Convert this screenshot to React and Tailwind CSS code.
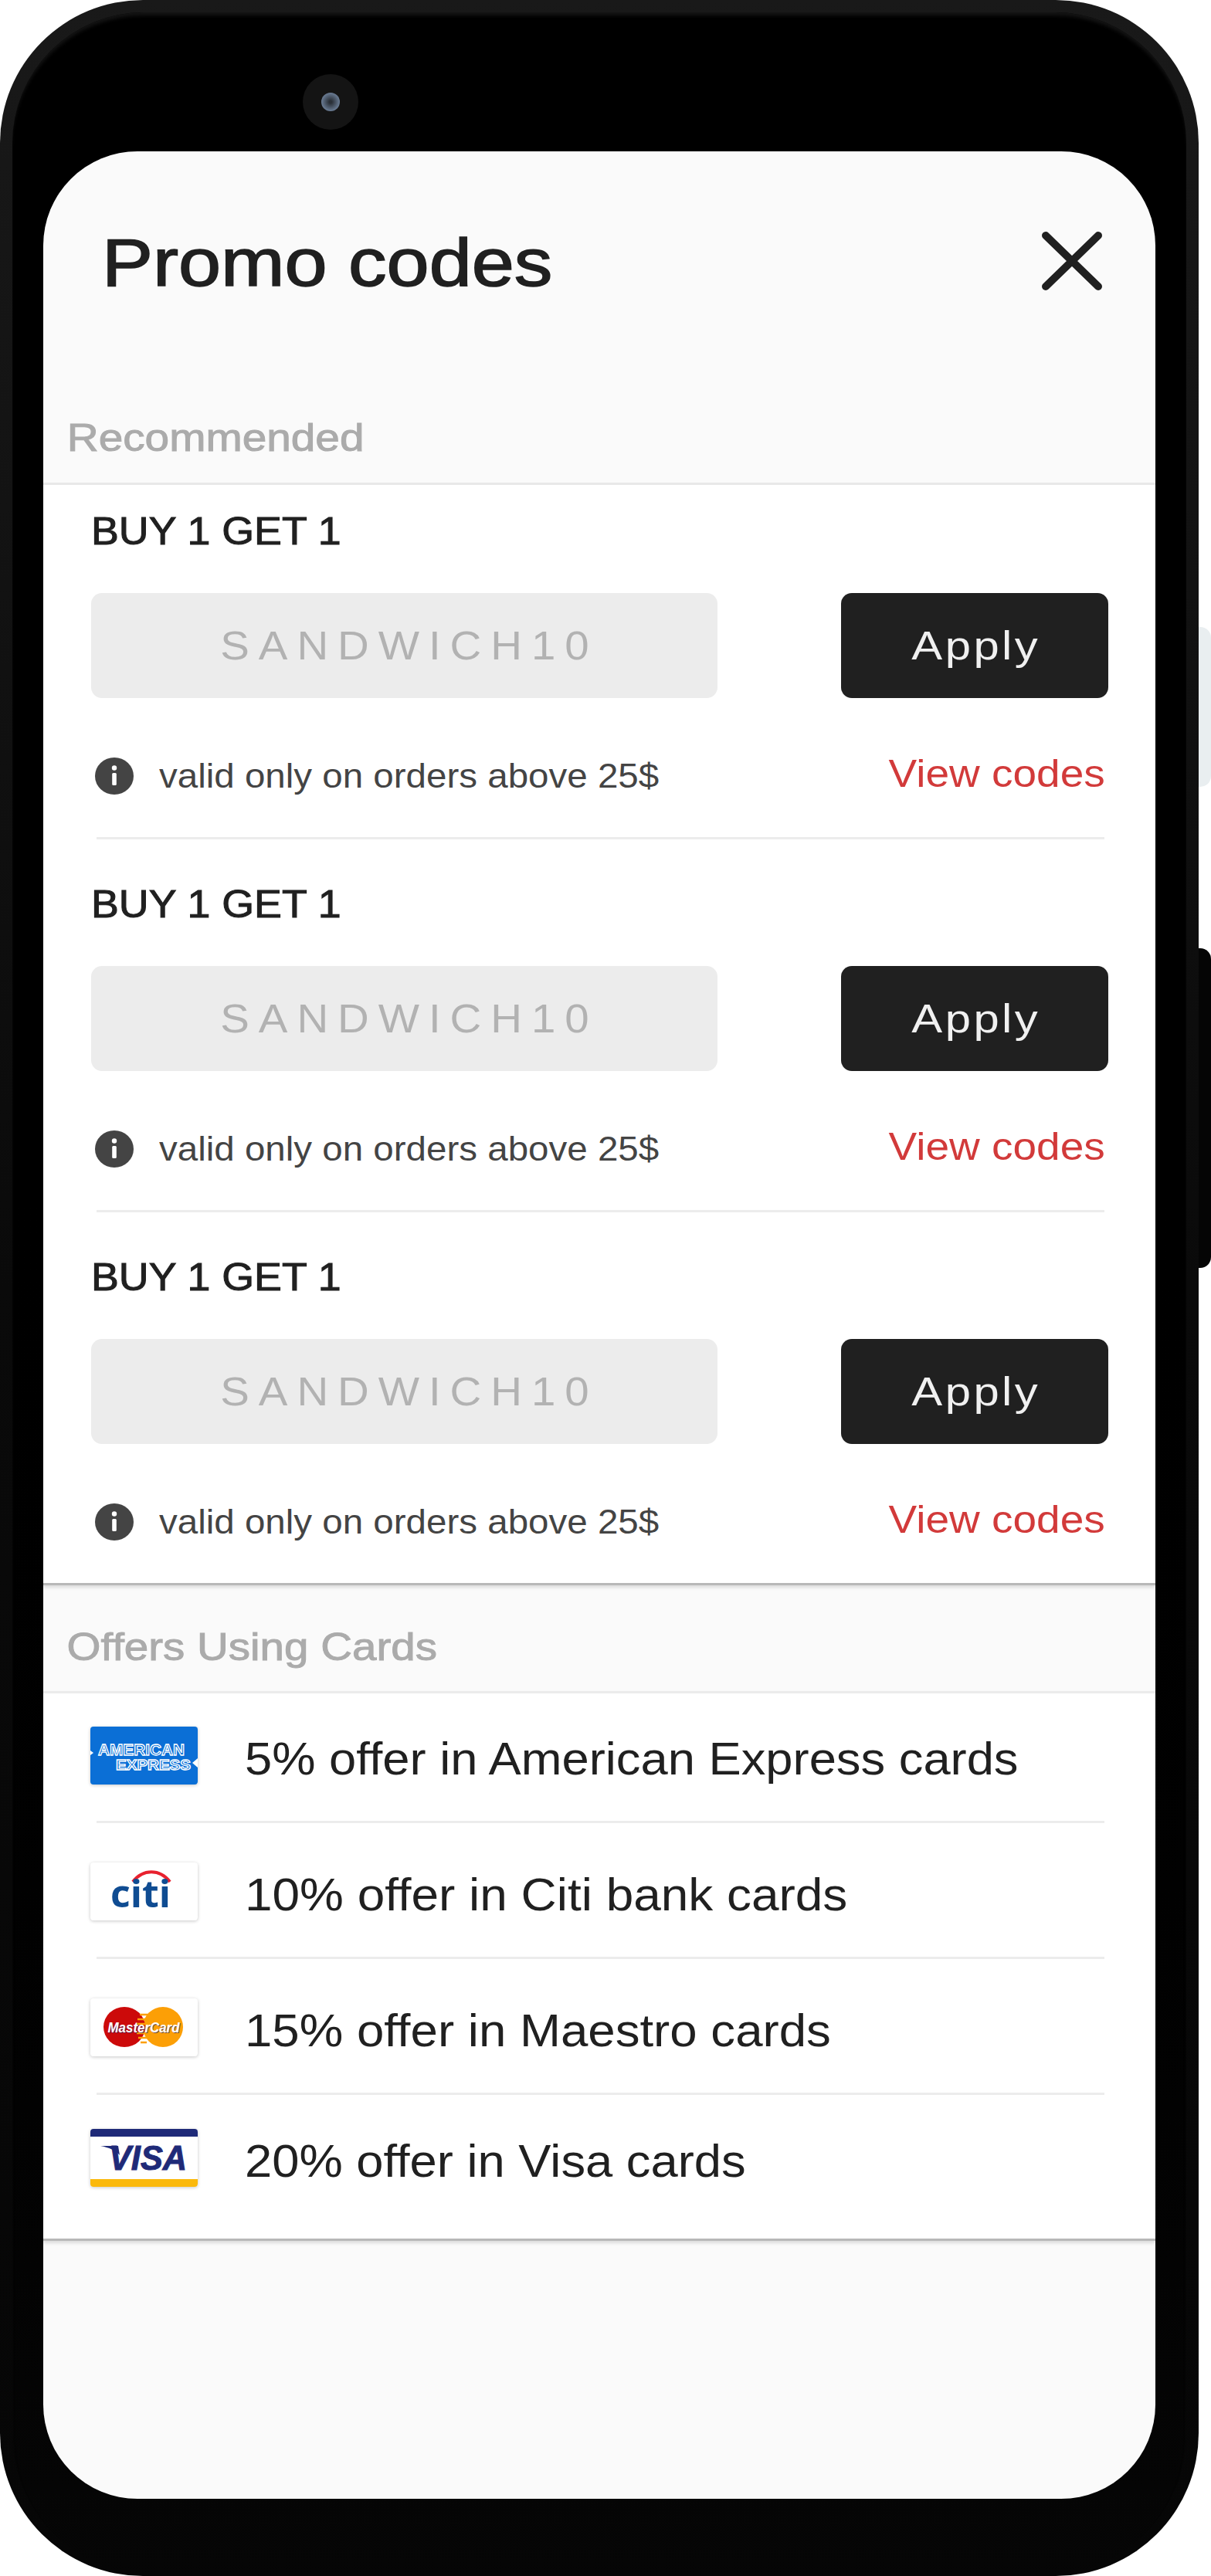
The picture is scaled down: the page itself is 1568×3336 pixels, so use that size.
const FONT = "font-['Liberation_Sans',Arial,sans-serif]";

function InfoIcon() {
  return (
    <svg width="50" height="48" viewBox="0 0 50 48" className="shrink-0">
      <ellipse cx="25" cy="24" rx="25" ry="24" fill="#444444" />
      <circle cx="25" cy="13.5" r="3.2" fill="#ffffff" />
      <rect x="22.2" y="20" width="5.6" height="16" rx="1.5" fill="#ffffff" />
    </svg>
  );
}

function CloseIcon() {
  return (
    <svg width="78" height="76" viewBox="0 0 78 76">
      <path d="M5 5 L73 71 M73 5 L5 71" stroke="#202020" strokeWidth="10" strokeLinecap="round" fill="none" />
    </svg>
  );
}

function PromoRow({ last }) {
  return (
    <div className="pt-[30px] pl-[62px] pr-[61px]">
      <div className="origin-left scale-x-[1.075] text-[50px] leading-[60px] text-[#202020] [-webkit-text-stroke:1px_#202020]">BUY 1 GET 1</div>
      <div className="mt-[50px] flex justify-between">
        <div className="flex h-[136px] w-[811px] items-center justify-center rounded-[14px] bg-[#ececec]">
          <span className="inline-block scale-x-[1.085] pl-[11px] text-[52px] tracking-[11px] text-[#b2b2b2]">SANDWICH10</span>
        </div>
        <div className="flex h-[136px] w-[346px] items-center justify-center rounded-[14px] bg-[#202020]">
          <span className="inline-block scale-x-[1.15] pl-[3px] text-[52px] tracking-[3px] text-[#f0f0f0]">Apply</span>
        </div>
      </div>
      <div className="mt-[68px] flex h-[60px] items-center justify-between pr-[4px]">
        <div className="flex items-center gap-[33px] pl-[5px] pt-[5px]">
          <InfoIcon />
          <span className="inline-block origin-left scale-x-[1.08] text-[44px] leading-[52px] text-[#444444]">valid only on orders above 25$</span>
        </div>
        <span className="inline-block origin-right scale-x-[1.1] text-[50px] leading-[60px] text-[#d23a3a]">View codes</span>
      </div>
      {!last && <div className="mt-[52px] ml-[7px] mr-[5px] h-[3px] bg-[#ececec]" />}
      {!last && <div className="h-[24px]" />}
      {last && <div className="h-[52px]" />}
    </div>
  );
}

function CardBox({ children, extra }) {
  return (
    <div className={`h-[75px] w-[139px] shrink-0 overflow-hidden rounded-[4px] shadow-[0_1px_4px_rgba(0,0,0,0.22)] ${extra}`}>
      {children}
    </div>
  );
}

function AmexLogo() {
  return (
    <CardBox extra="bg-[#0b6fd6]">
      <svg width="139" height="75" viewBox="0 0 139 75">
        <text x="10" y="37" fontFamily="Liberation Sans" fontWeight="700" fontSize="21" textLength="112" lengthAdjust="spacingAndGlyphs" fill="#0b6fd6" stroke="#ffffff" strokeWidth="1.3">AMERICAN</text>
        <text x="33" y="56" fontFamily="Liberation Sans" fontWeight="700" fontSize="18" textLength="97" lengthAdjust="spacingAndGlyphs" fill="#0b6fd6" stroke="#ffffff" strokeWidth="1.3">EXPRESS</text>
        <path d="M0 31 L4 34 L0 37 Z" fill="#ffffff" />
        <path d="M139 41 L132 47 L139 53 Z" fill="#ffffff" />
      </svg>
    </CardBox>
  );
}

function CitiLogo() {
  return (
    <CardBox extra="bg-white">
      <svg width="139" height="75" viewBox="0 0 139 75">
        <path d="M55 25 C68 8 90 8 103 25" stroke="#e8212e" strokeWidth="4" fill="none" />
        <text x="26" y="58" fontFamily="Open Sans" fontWeight="700" fontSize="48" textLength="78" lengthAdjust="spacingAndGlyphs" fill="#0f4c92">citi</text>
      </svg>
    </CardBox>
  );
}

function MastercardLogo() {
  return (
    <CardBox extra="bg-white">
      <svg width="139" height="75" viewBox="0 0 139 75">
        <ellipse cx="94" cy="37" rx="26" ry="26" fill="#fc9f06" />
        <ellipse cx="44" cy="37" rx="27" ry="26" fill="#cc0a0a" />
        <path d="M64 21 H75 M61 27 H77 M60 33 H78 M60 45 H78 M62 51 H76 M65 57 H73" stroke="#fc9f06" strokeWidth="2.4" />
        <text x="23.5" y="44.5" fontFamily="Liberation Sans" fontWeight="700" fontStyle="italic" fontSize="18" textLength="93" lengthAdjust="spacingAndGlyphs" fill="#30306e" opacity="0.7">MasterCard</text>
        <text x="22.5" y="43.5" fontFamily="Liberation Sans" fontWeight="700" fontStyle="italic" fontSize="18" textLength="93" lengthAdjust="spacingAndGlyphs" fill="#ffffff">MasterCard</text>
      </svg>
    </CardBox>
  );
}

function VisaLogo() {
  return (
    <CardBox extra="bg-white">
      <svg width="139" height="75" viewBox="0 0 139 75">
        <rect x="0" y="0" width="139" height="10" fill="#1f2a78" />
        <rect x="0" y="65" width="139" height="10" fill="#fbb90c" />
        <path d="M13 22 H36 L38 34 C33 28 24 24 13 22 Z" fill="#1f2a78" />
        <text x="24" y="53" fontFamily="Liberation Sans" fontWeight="700" fontStyle="italic" fontSize="44" textLength="101" lengthAdjust="spacingAndGlyphs" fill="#1f2a78" stroke="#1f2a78" strokeWidth="1">VISA</text>
      </svg>
    </CardBox>
  );
}

const offers = [
  { logo: <AmexLogo />, text: '5% offer in American Express cards', pad: 'pt-[43px] pb-[47px]', sx: 'scale-x-[1.055]' },
  { logo: <CitiLogo />, text: '10% offer in Citi bank cards', pad: 'pt-[51px] pb-[47px]', sx: 'scale-x-[1.065]' },
  { logo: <MastercardLogo />, text: '15% offer in Maestro cards', pad: 'pt-[51px] pb-[47px]', sx: 'scale-x-[1.06]' },
  { logo: <VisaLogo />, text: '20% offer in Visa cards', pad: 'pt-[44px] pb-[67px]', sx: 'scale-x-[1.055]' },
];

export default function App() {
  return (
    <div className={`relative h-[3336px] w-[1568px] overflow-hidden bg-white ${FONT}`}>
      {/* side buttons */}
      <div className="absolute left-[1552px] top-[812px] h-[207px] w-[16px] rounded-r-[14px] bg-[#e9eef0]" />
      <div className="absolute left-[1552px] top-[1228px] h-[414px] w-[16px] rounded-r-[14px] bg-[#050505]" />

      <div className="h-[3336px] w-[1552px] rounded-[185px] bg-gradient-to-b from-[#191919] via-[#0a0a0a] via-50% to-[#060606] px-[16px] pt-[16px]">
        <div className="h-[3320px] rounded-t-[170px] rounded-b-[185px] bg-gradient-to-b from-[#000000] via-[#000000] via-40% to-[#060606] px-[40px] pt-[80px] shadow-[inset_0_6px_5px_-2px_#151515]">
          {/* camera */}
          <div className="ml-[336px] flex h-[72px] w-[72px] items-center justify-center rounded-full bg-[#141414]">
            <div className="h-[24px] w-[24px] rounded-full bg-[radial-gradient(circle,#2a3038_10%,#6a7c94_70%)]" />
          </div>

          <div className="mt-[28px] flex h-[3040px] w-[1440px] flex-col overflow-hidden rounded-[122px] bg-[#fafafa]">
            <div className="flex h-[341px] items-start justify-between pl-[76px] pr-[69px] pt-[92px]">
              <h1 className="origin-left scale-x-[1.125] text-[88px] leading-[104px] text-[#202020] [-webkit-text-stroke:1.6px_#202020]">Promo codes</h1>
              <div className="pt-[12px]">
                <CloseIcon />
              </div>
            </div>
            <div className="h-[88px] origin-left scale-x-[1.135] pl-[27px] text-[50px] leading-[60px] text-[#ababab] [-webkit-text-stroke:1px_#ababab]">Recommended</div>

            <div className="border-t-[3px] border-b-[3px] border-t-[#e8e8e8] border-b-[#b8b8b8] bg-white shadow-[0_3px_4px_rgba(0,0,0,0.12)]">
              <PromoRow />
              <PromoRow />
              <PromoRow last />
            </div>

            <div className="h-[137px] origin-left scale-x-[1.13] pl-[27px] pt-[50px] text-[50px] leading-[60px] text-[#ababab] [-webkit-text-stroke:1px_#ababab]">Offers Using Cards</div>

            <div className="border-t-[3px] border-b-[3px] border-t-[#ebebeb] border-b-[#b8b8b8] bg-white shadow-[0_3px_4px_rgba(0,0,0,0.12)]">
              {offers.map((o, i) => (
                <div key={i}>
                  <div className={`flex items-center gap-[61px] pl-[61px] ${o.pad}`}>
                    {o.logo}
                    <span className={`inline-block h-[75px] origin-left pt-[8px] text-[60px] leading-[67px] text-[#202020] ${o.sx}`}>{o.text}</span>
                  </div>
                  {i < 3 && <div className="ml-[69px] mr-[66px] h-[3px] bg-[#ececec]" />}
                </div>
              ))}
            </div>
          </div>
        </div>
      </div>
    </div>
  );
}
